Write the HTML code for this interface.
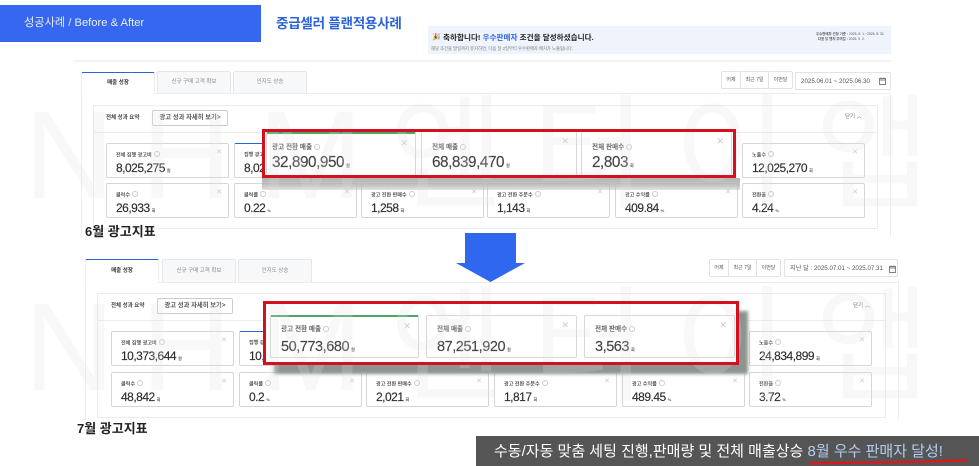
<!DOCTYPE html>
<html lang="ko"><head><meta charset="utf-8"><title>성공사례</title>
<style>
html,body{margin:0;padding:0;background:#fff}
#w{position:relative;width:979px;height:466px;overflow:hidden;background:#fff;font-family:"Liberation Sans","Noto Sans CJK KR",sans-serif;color:#333;filter:blur(.3px)}
#w div,#w span.a,#w svg{position:absolute;box-sizing:border-box}
.wm{color:rgba(225,225,225,.22);font-size:125px;line-height:125px;white-space:nowrap;letter-spacing:27px;font-weight:400;z-index:5}
.tab{background:#f7f8fa;border:1px solid #e6e7ea;border-bottom:0;font-size:5.5px;color:#888;text-align:center;line-height:21px;border-radius:2px 2px 0 0}
.tab.on{background:#fff;border:0;border-top:1.5px solid #2b62d8;border-left:1px solid #eee;border-right:1px solid #eee;color:#333;font-weight:700}
.ln{background:#ededed}
.box{border:1px solid #ececec;background:transparent}
.c{background:#fff;border:1px solid #d6d6d6;border-radius:2px;width:123px;height:35px}
.c .l{left:9px;top:7px;font-size:5.1px;font-weight:700;color:#555;white-space:nowrap}
.c .v{left:9px;top:16.500px;font-size:12px;line-height:14px;letter-spacing:-.5px;color:#2b2b2b;white-space:nowrap;-webkit-text-stroke:.15px #333}
.u{font-size:4px;margin-left:2px;color:#555;font-weight:700;letter-spacing:0;-webkit-text-stroke:0}
.c .x{right:6px;top:4px;font-size:7px;line-height:9px;color:#ccc}
.q{display:inline-block;width:4px;height:4px;border:.5px solid #ccc;border-radius:50%;margin-left:2px;vertical-align:-.5px}
.b{background:#fff;border:1px solid #d8d8d8;border-radius:2px;height:42px}
.b .l{left:5px;top:7px;font-size:6.6px;font-weight:700;color:#666;white-space:nowrap}
.b .v{left:5px;top:20px;font-size:15.300px;line-height:18px;letter-spacing:-.45px;color:#444;white-space:nowrap;-webkit-text-stroke:.15px #444}
.b .x{right:7px;top:4px;font-size:9px;line-height:11px;color:#ccc}
.j .l{left:10px;top:6px}
.j .v{left:10px;top:21px;font-size:14.500px;letter-spacing:-.45px}
.red{border:3px solid #d4101f;z-index:6}
.seg{border:1px solid #e2e2e2;border-radius:2px;background:#fff;font-size:5px;color:#555;line-height:17px;text-align:center}
.date{border:1px solid #e2e2e2;border-radius:2px;background:#fff;font-size:6.2px;color:#555;line-height:17px;white-space:nowrap;padding-left:5px}
.sum{font-size:5.5px;font-weight:700;color:#444;white-space:nowrap}
.btn{border:1px solid #ccc;border-radius:2px;font-size:6.3px;color:#555;font-weight:700;text-align:center;background:#fff;white-space:nowrap}
.cap{font-size:13px;font-weight:700;color:#222;white-space:nowrap;z-index:6}
</style></head><body><div id="w">

<div class="wm" style="left:24px;top:93px">NHM엔터이앱</div>
<div class="wm" style="left:24px;top:285px">NHM엔터이앱</div>

<div style="left:0;top:5px;width:261px;height:37px;background:#3567f0"></div>
<div style="left:24px;top:16px;font-size:11.200px;line-height:14px;color:#e8eefc;white-space:nowrap">성공사례 / Before &amp; After</div>
<div style="left:276px;top:15px;font-size:13.600px;line-height:18px;font-weight:700;color:#2b64d6;white-space:nowrap;letter-spacing:-.3px">중급셀러 플랜적용사례</div>

<div style="left:428px;top:26px;width:463px;height:28px;background:#eef3fc"></div>
<div style="left:432px;top:33px;font-size:7px;line-height:9px">🎉</div>
<div style="left:443px;top:33px;font-size:7.600px;line-height:9px;font-weight:700;color:#222;white-space:nowrap">축하합니다! <span style="color:#2f66e8">우수판매자</span> 조건을 달성하셨습니다.</div>
<div style="left:431px;top:46px;font-size:4.300px;line-height:5px;color:#777;white-space:nowrap">해당 조건을 말일까지 유지하면, 다음 달 2일부터 우수판매자 배지가 노출됩니다.</div>
<div style="left:816px;top:32px;font-size:3.4px;line-height:5px;color:#555;white-space:nowrap"><b>우수판매자 선정 기준 :</b> 2025. 8. 1.~2025. 8. 31</div>
<div style="left:818px;top:37px;font-size:3.4px;line-height:5px;color:#555;white-space:nowrap"><b>다음 달 뱃지 부여일 :</b> 2025. 9. 2.</div>
<div class="ln" style="left:73px;top:60px;width:818px;height:2px;background:#f3f3f3"></div>

<!-- June -->
<div class="ln" style="left:81px;top:93px;width:809px;height:1px"></div>
<div class="ln" style="left:81px;top:93px;width:1px;height:144px"></div>
<div class="ln" style="left:890px;top:93px;width:1px;height:144px"></div>
<div class="tab on" style="left:81px;top:72px;width:74px;height:22px">매출 성장</div>
<div class="tab" style="left:157px;top:71px;width:74px;height:22px">신규 구매 고객 확보</div>
<div class="tab" style="left:233px;top:71px;width:74px;height:22px">인지도 상승</div>
<div class="seg" style="left:721px;top:71px;width:20px;height:18px">어제</div>
<div class="seg" style="left:740px;top:71px;width:29px;height:18px">최근 7일</div>
<div class="seg" style="left:768px;top:71px;width:25px;height:18px">이번달</div>
<div class="date" style="left:795px;top:72px;width:96px;height:18px">2025.06.01 ~ 2025.06.30</div>
<svg style="left:879px;top:77px" width="7" height="8" viewBox="0 0 7 8"><path d="M.5 1.5h6v6h-6zM.5 3h6M2 .5v1.5M5 .5v1.5" fill="none" stroke="#555" stroke-width=".7"/></svg>

<div class="box" style="left:93px;top:105px;width:785px;height:124px"></div>
<div class="ln" style="left:93px;top:132px;width:785px;height:1px"></div>
<div class="sum" style="left:106px;top:114px;line-height:8px">전체 성과 요약</div>
<div class="btn" style="left:152px;top:110px;width:76px;height:16px;line-height:14px">광고 성과 자세히 보기&gt;</div>
<div style="left:845px;top:113px;font-size:5.5px;line-height:8px;color:#777;white-space:nowrap">닫기 ︿</div>

<div class="c" style="left:106px;top:143px"><div class="l">전체 집행 광고비<i class="q"></i></div><div class="v">8,025,275<span class="u">원</span></div><div class="x">✕</div></div>
<div class="c" style="left:234px;top:143px;border-top:1.5px solid #2b62d8"><div class="l">집행 광고비</div><div class="v">8,025,275</div></div>
<div class="c" style="left:742px;top:143px"><div class="l">노출수<i class="q"></i></div><div class="v">12,025,270<span class="u">회</span></div><div class="x">✕</div></div>
<div class="c" style="left:106px;top:183px"><div class="l">클릭수<i class="q"></i></div><div class="v">26,933<span class="u">회</span></div><div class="x">✕</div></div>
<div class="c" style="left:234px;top:183px"><div class="l">클릭률<i class="q"></i></div><div class="v">0.22<span class="u">%</span></div><div class="x">✕</div></div>
<div class="c" style="left:361px;top:183px"><div class="l">광고 전환 판매수<i class="q"></i></div><div class="v">1,258<span class="u">회</span></div><div class="x">✕</div></div>
<div class="c" style="left:487px;top:183px"><div class="l">광고 전환 주문수<i class="q"></i></div><div class="v">1,143<span class="u">회</span></div><div class="x">✕</div></div>
<div class="c" style="left:615px;top:183px"><div class="l">광고 수익률<i class="q"></i></div><div class="v">409.84<span class="u">%</span></div><div class="x">✕</div></div>
<div class="c" style="left:742px;top:183px"><div class="l">전환율<i class="q"></i></div><div class="v">4.24<span class="u">%</span></div><div class="x">✕</div></div>

<div style="left:262px;top:178px;width:478px;height:12px;background:linear-gradient(#a9a9a9,#b8b8b8 60%,rgba(190,190,190,.5));opacity:.85"></div>
<div style="left:262px;top:129px;width:474px;height:49px;background:#fff"></div>
<div class="b" style="left:266px;top:132px;width:150px;height:44px;border-top:2px solid #4fa56a"><div class="l">광고 전환 매출<i class="q"></i></div><div class="v">32,890,950<span class="u">원</span></div><div class="x">✕</div></div>
<div class="b" style="left:421px;top:132px;width:156px;height:44px;border-top:0;border-bottom:0"><div class="l" style="left:10px;top:9px">전체 매출<i class="q"></i></div><div class="v" style="left:10px;top:22px">68,839,470<span class="u">원</span></div><div class="x">✕</div></div>
<div class="b" style="left:581px;top:132px;width:151px;height:44px;border-top:0;border-bottom:0"><div class="l" style="left:10px;top:9px">전체 판매수<i class="q"></i></div><div class="v" style="left:10px;top:22px">2,803<span class="u">회</span></div><div class="x">✕</div></div>
<div class="red" style="left:262px;top:129px;width:474px;height:49px"></div>

<div class="cap" style="left:85px;top:224px;line-height:16px">6월 광고지표</div>

<svg style="left:456px;top:233px;z-index:6" width="70" height="50" viewBox="0 0 70 50"><path d="M9 0H60V30H69L34.500 49L0 30H9Z" fill="#2f67ef"/></svg>

<!-- July -->
<div class="ln" style="left:85px;top:282px;width:813px;height:1px"></div>
<div class="ln" style="left:85px;top:282px;width:1px;height:138px"></div>
<div class="ln" style="left:898px;top:282px;width:1px;height:138px"></div>
<div class="tab on" style="left:85px;top:259px;width:74px;height:24px;line-height:23px">매출 성장</div>
<div class="tab" style="left:162px;top:259px;width:74px;height:23px;line-height:23px">신규 구매 고객 확보</div>
<div class="tab" style="left:238px;top:259px;width:74px;height:23px;line-height:23px">인지도 상승</div>
<div class="seg" style="left:709px;top:259px;width:20px;height:18px">어제</div>
<div class="seg" style="left:728px;top:259px;width:29px;height:18px">최근 7일</div>
<div class="seg" style="left:756px;top:259px;width:25px;height:18px">이번달</div>
<div class="date" style="left:784px;top:259px;width:114px;height:18px">지난 달 : 2025.07.01 ~ 2025.07.31</div>
<svg style="left:889px;top:265px" width="7" height="8" viewBox="0 0 7 8"><path d="M.5 1.5h6v6h-6zM.5 3h6M2 .5v1.5M5 .5v1.5" fill="none" stroke="#555" stroke-width=".7"/></svg>

<div class="box" style="left:97px;top:293px;width:789px;height:125px"></div>
<div class="ln" style="left:97px;top:320px;width:789px;height:1px"></div>
<div class="sum" style="left:111px;top:302px;line-height:8px">전체 성과 요약</div>
<div class="btn" style="left:157px;top:298px;width:76px;height:16px;line-height:14px">광고 성과 자세히 보기&gt;</div>
<div style="left:853px;top:302px;font-size:5.5px;line-height:8px;color:#777;white-space:nowrap">닫기 ︿</div>

<div class="c" style="left:111px;top:331px"><div class="l">전체 집행 광고비<i class="q"></i></div><div class="v">10,373,644<span class="u">원</span></div><div class="x">✕</div></div>
<div class="c" style="left:239px;top:331px;border-top:1.5px solid #2b62d8"><div class="l">집행 광고비</div><div class="v">10,373,644</div></div>
<div class="c" style="left:749px;top:331px"><div class="l">노출수<i class="q"></i></div><div class="v">24,834,899<span class="u">회</span></div><div class="x">✕</div></div>
<div class="c" style="left:111px;top:372px"><div class="l">클릭수<i class="q"></i></div><div class="v">48,842<span class="u">회</span></div><div class="x">✕</div></div>
<div class="c" style="left:239px;top:372px"><div class="l">클릭률<i class="q"></i></div><div class="v">0.2<span class="u">%</span></div><div class="x">✕</div></div>
<div class="c" style="left:366px;top:372px"><div class="l">광고 전환 판매수<i class="q"></i></div><div class="v">2,021<span class="u">회</span></div><div class="x">✕</div></div>
<div class="c" style="left:494px;top:372px"><div class="l">광고 전환 주문수<i class="q"></i></div><div class="v">1,817<span class="u">회</span></div><div class="x">✕</div></div>
<div class="c" style="left:622px;top:372px"><div class="l">광고 수익률<i class="q"></i></div><div class="v">489.45<span class="u">%</span></div><div class="x">✕</div></div>
<div class="c" style="left:749px;top:372px"><div class="l">전환율<i class="q"></i></div><div class="v">3.72<span class="u">%</span></div><div class="x">✕</div></div>

<div style="left:274px;top:311px;width:474px;height:63px;background:#8d9490;filter:blur(1.5px)"></div>
<div style="left:263px;top:301px;width:476px;height:64px;background:#fff"></div>
<div class="b j" style="left:270px;top:315px;width:149px;height:43px;border-top:2px solid #4fa56a"><div class="l">광고 전환 매출<i class="q"></i></div><div class="v">50,773,680<span class="u">원</span></div><div class="x">✕</div></div>
<div class="b j" style="left:426px;top:315px;width:151px;height:43px"><div class="l" style="top:7px">전체 매출<i class="q"></i></div><div class="v" style="top:22px">87,251,920<span class="u">원</span></div><div class="x">✕</div></div>
<div class="b j" style="left:584px;top:315px;width:151px;height:43px"><div class="l" style="top:7px">전체 판매수<i class="q"></i></div><div class="v" style="top:22px">3,563<span class="u">회</span></div><div class="x">✕</div></div>
<div class="red" style="left:263px;top:301px;width:476px;height:64px"></div>

<div class="cap" style="left:77px;top:421px;line-height:16px">7월 광고지표</div>

<div style="left:476px;top:436px;width:503px;height:30px;background:#555;z-index:6"></div>
<div style="left:494px;top:443px;font-size:15px;line-height:18px;color:#fff;white-space:nowrap;z-index:7">수동/자동 맞춤 세팅 진행,판매량 및 전체 매출상승 <span style="color:#b3cdf0">8월 우수 판매자 달성!</span></div>
<svg style="left:808px;top:457px;z-index:8" width="162" height="8" viewBox="0 0 162 8"><path d="M1 6.500C40 5.500 110 5.500 160 3" fill="none" stroke="#e2141c" stroke-width="2.200"/></svg>

</div></body></html>
